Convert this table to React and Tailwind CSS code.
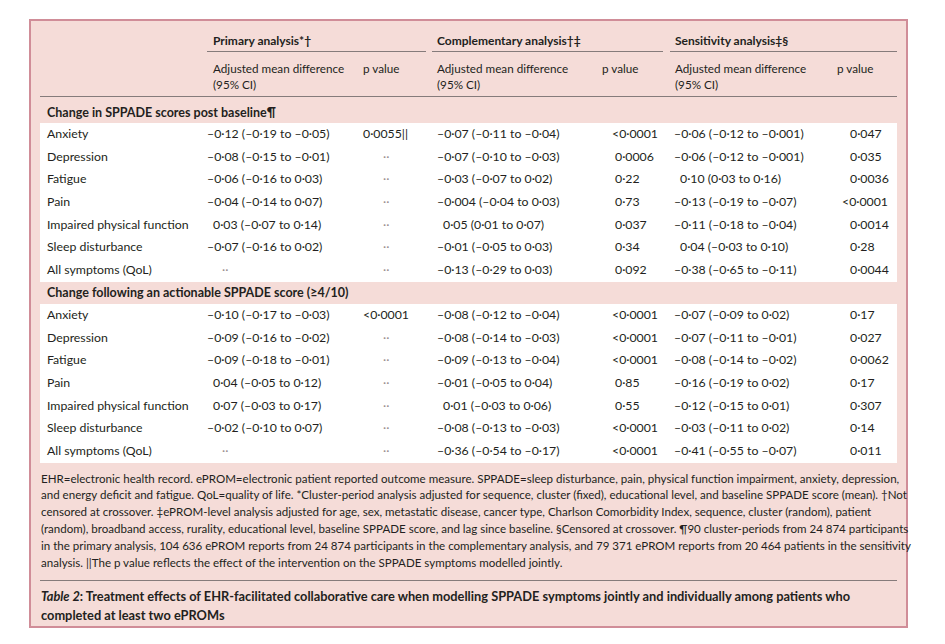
// Table 2 — SPPADE treatment effects (Lancet style table)

const section1 = [
    ['Anxiety', '–0·12 (–0·19 to –0·05)', '0·0055||', '–0·07 (–0·11 to –0·04)', '<0·0001', '–0·06 (–0·12 to –0·001)', '0·047'],
    ['Depression', '–0·08 (–0·15 to –0·01)', '··', '–0·07 (–0·10 to –0·03)', '0·0006', '–0·06 (–0·12 to –0·001)', '0·035'],
    ['Fatigue', '–0·06 (–0·16 to 0·03)', '··', '–0·03 (–0·07 to 0·02)', '0·22', '0·10 (0·03 to 0·16)', '0·0036'],
    ['Pain', '–0·04 (–0·14 to 0·07)', '··', '–0·004 (–0·04 to 0·03)', '0·73', '–0·13 (–0·19 to –0·07)', '<0·0001'],
    ['Impaired physical function', '0·03 (–0·07 to 0·14)', '··', '0·05 (0·01 to 0·07)', '0·037', '–0·11 (–0·18 to –0·04)', '0·0014'],
    ['Sleep disturbance', '–0·07 (–0·16 to 0·02)', '··', '–0·01 (–0·05 to 0·03)', '0·34', '0·04 (–0·03 to 0·10)', '0·28'],
    ['All symptoms (QoL)', '··', '··', '–0·13 (–0·29 to 0·03)', '0·092', '–0·38 (–0·65 to –0·11)', '0·0044'],
];

const section2 = [
    ['Anxiety', '–0·10 (–0·17 to –0·03)', '<0·0001', '–0·08 (–0·12 to –0·04)', '<0·0001', '–0·07 (–0·09 to 0·02)', '0·17'],
    ['Depression', '–0·09 (–0·16 to –0·02)', '··', '–0·08 (–0·14 to –0·03)', '<0·0001', '–0·07 (–0·11 to –0·01)', '0·027'],
    ['Fatigue', '–0·09 (–0·18 to –0·01)', '··', '–0·09 (–0·13 to –0·04)', '<0·0001', '–0·08 (–0·14 to –0·02)', '0·0062'],
    ['Pain', '0·04 (–0·05 to 0·12)', '··', '–0·01 (–0·05 to 0·04)', '0·85', '–0·16 (–0·19 to 0·02)', '0·17'],
    ['Impaired physical function', '0·07 (–0·03 to 0·17)', '··', '0·01 (–0·03 to 0·06)', '0·55', '–0·12 (–0·15 to 0·01)', '0·307'],
    ['Sleep disturbance', '–0·02 (–0·10 to 0·07)', '··', '–0·08 (–0·13 to –0·03)', '<0·0001', '–0·03 (–0·11 to 0·02)', '0·14'],
    ['All symptoms (QoL)', '··', '··', '–0·36 (–0·54 to –0·17)', '<0·0001', '–0·41 (–0·55 to –0·07)', '0·011'],
];

const footnote = [
    'EHR=electronic health record. ePROM=electronic patient reported outcome measure. SPPADE=sleep disturbance, pain, physical function impairment, anxiety, depression,',
    'and energy deficit and fatigue. QoL=quality of life. *Cluster-period analysis adjusted for sequence, cluster (fixed), educational level, and baseline SPPADE score (mean). †Not',
    'censored at crossover. ‡ePROM-level analysis adjusted for age, sex, metastatic disease, cancer type, Charlson Comorbidity Index, sequence, cluster (random), patient',
    '(random), broadband access, rurality, educational level, baseline SPPADE score, and lag since baseline. §Censored at crossover. ¶90 cluster-periods from 24\u202F874 participants',
    'in the primary analysis, 104\u202F636 ePROM reports from 24\u202F874 participants in the complementary analysis, and 79\u202F371 ePROM reports from 20\u202F464 patients in the sensitivity',
    'analysis. ||The p value reflects the effect of the intervention on the SPPADE symptoms modelled jointly.',
];

// padding per column, so minus signs hang and p values line up like the print table
function cellPad(col, v) {
    const dots = v === '··';
    const neg = v.startsWith('–');
    const lt = v.startsWith('<');
    if (col === 1) return dots ? 'pl-[15px] text-[#9a9090]' : neg ? 'pl-0' : 'pl-[6px]';
    if (col === 2) return dots ? 'pl-[20px] text-[#9a9090]' : 'pl-0';
    if (col === 3) return neg ? 'pl-[5px]' : 'pl-[11px]';
    if (col === 4) return lt ? 'pl-[10px]' : 'pl-[13px]';
    if (col === 5) return neg ? 'pl-[4px]' : 'pl-[10px]';
    return lt ? 'pl-[5px]' : 'pl-[13px]';
}

function Rows({ rows }) {
    return (
        <div className="bg-white">
            {rows.map((r) => (
                <div key={r[0]} className="grid grid-cols-[167px_156px_69px_170px_68px_167px_60px] h-[22.7px] items-center">
                    <span className="pl-[7px]">{r[0]}</span>
                    {r.slice(1).map((v, i) => (
                        <span key={i} className={`whitespace-nowrap ${cellPad(i + 1, v)}`}>{v}</span>
                    ))}
                </div>
            ))}
        </div>
    );
}

export default function App() {
    return (
        <div className="min-h-[644px] bg-white pt-[19px] pl-[29px] font-[Lato,sans-serif] text-[#231f20]">
            <div className="w-[879px] border-2 border-[#d08d98] bg-[#f5dcd8] px-[9px] text-[12.3px] leading-[22.7px]">
                {/* group headers */}
                <div className="grid grid-cols-[167px_225px_238px_227px] h-[31px] items-end text-[12px]">
                    <span />
                    <span className="mr-[6px] border-b border-[#857b7b] pl-[6px] font-bold leading-[20px]">Primary analysis*†</span>
                    <span className="mr-[7px] border-b border-[#857b7b] pl-[5px] font-bold leading-[20px]">Complementary analysis†‡</span>
                    <span className="border-b border-[#857b7b] pl-[5px] font-bold leading-[20px]">Sensitivity analysis‡§</span>
                </div>

                {/* sub headers */}
                <div className="grid grid-cols-[167px_156px_69px_170px_68px_167px_60px] border-b border-[#857b7b] pt-[8px] pb-[4px] text-[11.7px] leading-[16px]">
                    <span />
                    <span className="pl-[6px]">Adjusted mean difference<br />(95% CI)</span>
                    <span>p value</span>
                    <span className="pl-[5px]">Adjusted mean difference<br />(95% CI)</span>
                    <span>p value</span>
                    <span className="pl-[5px]">Adjusted mean difference<br />(95% CI)</span>
                    <span>p value</span>
                </div>

                <p className="pt-[6px] pl-[7px] font-bold text-[12.5px] leading-[20px]">Change in SPPADE scores post baseline¶</p>
                <Rows rows={section1} />

                <p className="pl-[7px] font-bold text-[12.5px] leading-[22px]">Change following an actionable SPPADE score (≥4/10)</p>
                <Rows rows={section2} />

                <p className="pt-[8px] pb-[9px] pl-[1px] text-[11.55px] leading-[16.8px] border-b border-[#857b7b]">
                    {footnote.map((l, i) => (
                        <span key={i} className="block whitespace-nowrap">{l}</span>
                    ))}
                </p>

                <p className="pt-[6px] pb-[1px] pl-[1px] font-bold text-[12.8px] leading-[19px]">
                    <em>Table 2</em>: Treatment effects of EHR-facilitated collaborative care when modelling SPPADE symptoms jointly and individually among patients who<br />
                    completed at least two ePROMs
                </p>
            </div>
        </div>
    );
}
